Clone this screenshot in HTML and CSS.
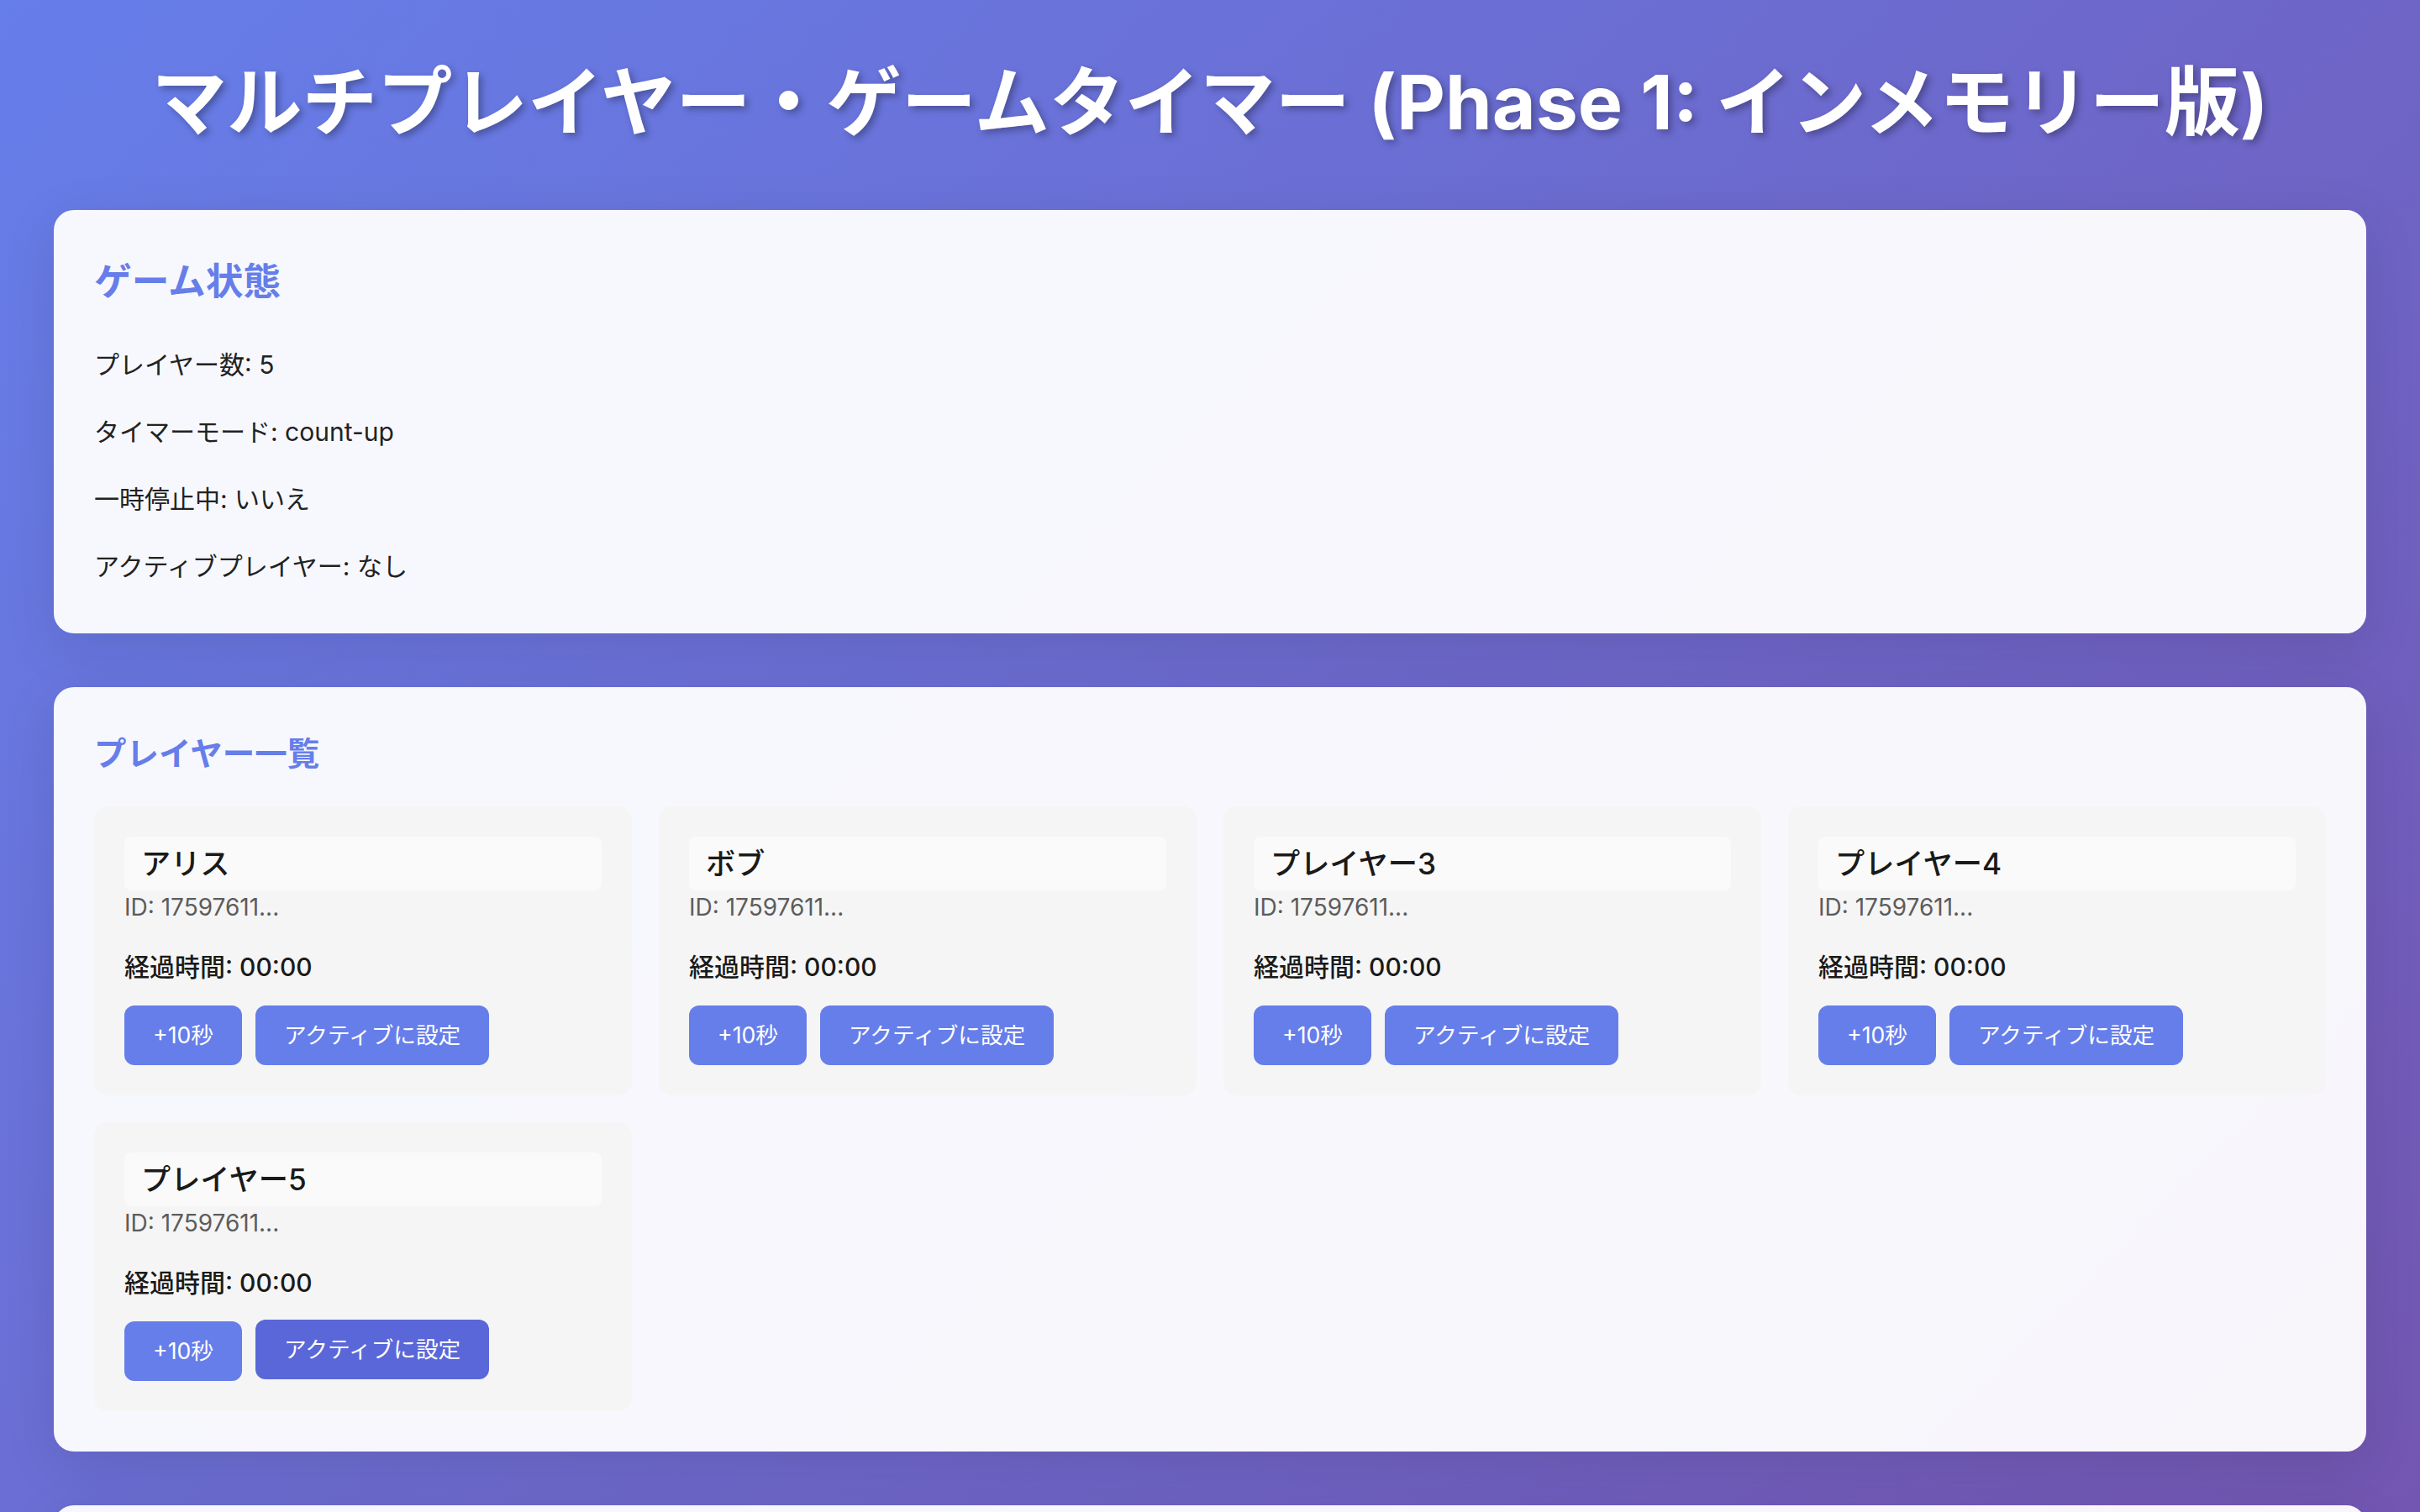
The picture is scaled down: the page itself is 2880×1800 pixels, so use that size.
FILE: index.html
```html
<!DOCTYPE html>
<html lang="ja">
<head>
<meta charset="utf-8">
<title>マルチプレイヤー・ゲームタイマー</title>
<link rel="stylesheet" href="styles.css">
</head>
<body>
<div class="app">
  <h1 class="title">マルチプレイヤー・ゲームタイマー (Phase 1: インメモリー版)</h1>

  <section class="card status">
    <h2 class="card-title">ゲーム状態</h2>
    <p>プレイヤー数: 5</p>
    <p>タイマーモード: count-up</p>
    <p>一時停止中: いいえ</p>
    <p>アクティブプレイヤー: なし</p>
  </section>

  <section class="card">
    <h3 class="card-subtitle">プレイヤー一覧</h3>
    <div class="players">
      <div class="player">
        <input class="player-name" type="text" value="アリス">
        <div class="player-id">ID: 17597611...</div>
        <div class="player-time">経過時間: 00:00</div>
        <div class="player-actions">
          <button class="btn">+10秒</button>
          <button class="btn">アクティブに設定</button>
        </div>
      </div>
      <div class="player">
        <input class="player-name" type="text" value="ボブ">
        <div class="player-id">ID: 17597611...</div>
        <div class="player-time">経過時間: 00:00</div>
        <div class="player-actions">
          <button class="btn">+10秒</button>
          <button class="btn">アクティブに設定</button>
        </div>
      </div>
      <div class="player">
        <input class="player-name" type="text" value="プレイヤー3">
        <div class="player-id">ID: 17597611...</div>
        <div class="player-time">経過時間: 00:00</div>
        <div class="player-actions">
          <button class="btn">+10秒</button>
          <button class="btn">アクティブに設定</button>
        </div>
      </div>
      <div class="player">
        <input class="player-name" type="text" value="プレイヤー4">
        <div class="player-id">ID: 17597611...</div>
        <div class="player-time">経過時間: 00:00</div>
        <div class="player-actions">
          <button class="btn">+10秒</button>
          <button class="btn">アクティブに設定</button>
        </div>
      </div>
      <div class="player">
        <input class="player-name" type="text" value="プレイヤー5">
        <div class="player-id">ID: 17597611...</div>
        <div class="player-time">経過時間: 00:00</div>
        <div class="player-actions">
          <button class="btn">+10秒</button>
          <button class="btn btn-hover">アクティブに設定</button>
        </div>
      </div>
    </div>
  </section>

  <section class="card controls">
    <h3 class="card-subtitle">ゲーム操作</h3>
    <div class="player-actions">
      <button class="btn">プレイヤー追加</button>
      <button class="btn">プレイヤー削除</button>
      <button class="btn">一時停止</button>
      <button class="btn">リセット</button>
      <button class="btn">モード切替</button>
    </div>
  </section>

  <section class="card debug">
    <h3 class="card-subtitle">デバッグ情報</h3>
    <pre class="debug-json">{
  "players": [
    { "id": "1759761100001", "name": "アリス", "elapsedTimeSeconds": 0 },
    { "id": "1759761100002", "name": "ボブ", "elapsedTimeSeconds": 0 },
    { "id": "1759761100003", "name": "プレイヤー3", "elapsedTimeSeconds": 0 },
    { "id": "1759761100004", "name": "プレイヤー4", "elapsedTimeSeconds": 0 },
    { "id": "1759761100005", "name": "プレイヤー5", "elapsedTimeSeconds": 0 }
  ],
  "activePlayerId": null,
  "isPaused": false,
  "timerMode": "count-up",
  "createdAt": "2025-10-06T14:38:20.000Z",
  "lastUpdatedAt": "2025-10-06T14:38:20.000Z"
}</pre>
  </section>
</div>
</body>
</html>
```

FILE: styles.css
```css
html, body {
  margin: 0;
  padding: 0;
}

body {
  font-family: "Inter", "Noto Sans CJK JP", sans-serif;
  font-size: 30px;
  line-height: 1.5;
  color: #222;
  background: linear-gradient(135deg, #667eea 0%, #764ba2 100%);
  min-height: 100vh;
}

.app {
  padding: 0 64px 64px;
}

.title {
  margin: 69px 0 75px;
  font-size: 89.5px;
  line-height: 106px;
  font-weight: 700;
  color: #ffffff;
  text-align: center;
  text-shadow: 4px 4px 8px rgba(0, 0, 0, 0.3);
}

.card {
  background: rgba(255, 255, 255, 0.95);
  border-radius: 24px;
  padding: 51px 48px 48px;
  margin-bottom: 64px;
  box-shadow: 0 16px 64px rgba(0, 0, 0, 0.1);
}

.status {
  padding-top: 52px;
}

.card-title {
  margin: 0 0 42px;
  font-size: 44.7px;
  line-height: 66px;
  font-weight: 700;
  color: #667eea;
}

.card-subtitle {
  margin: 0 0 35px;
  font-size: 38.5px;
  line-height: 56px;
  font-weight: 700;
  color: #667eea;
}

.status p {
  margin: 32px 0;
  line-height: 48px;
}

.status p:last-child {
  margin-bottom: 8px;
}

.players {
  display: grid;
  grid-template-columns: repeat(4, 1fr);
  gap: 32px;
}

.player {
  background: #f5f5f5;
  border-radius: 16px;
  padding: 36px;
}

.player-name {
  display: block;
  width: 100%;
  box-sizing: border-box;
  padding: 12px 20px;
  border: none;
  border-radius: 8px;
  background: #fafafa;
  font-family: "Inter", "Noto Sans CJK JP", sans-serif;
  font-size: 35.2px;
  line-height: 40px;
  font-weight: 500;
  color: #1a1a1a;
  outline: none;
}

.player-id {
  font-size: 28px;
  line-height: 40px;
  color: #5c5c5c;
}

.player-time {
  margin: 27px 0 22px;
  font-size: 30px;
  line-height: 48px;
  font-weight: 500;
  color: #1a1a1a;
}

.player-actions {
  display: flex;
  flex-wrap: wrap;
  gap: 16px;
}

.btn {
  padding: 16px 34px;
  border: none;
  border-radius: 12px;
  background: #667eea;
  color: #ffffff;
  font-family: "Inter", "Noto Sans CJK JP", sans-serif;
  font-size: 26.67px;
  line-height: 39px;
  cursor: pointer;
}

.btn-hover {
  background: #5a67d8;
  transform: translateY(-2px);
}

.debug-json {
  margin: 0;
  padding: 32px;
  background: #f5f5f5;
  border-radius: 16px;
  font-family: "Liberation Mono", monospace;
  font-size: 26px;
  line-height: 40px;
  color: #333;
  min-height: 480px;
}
```
